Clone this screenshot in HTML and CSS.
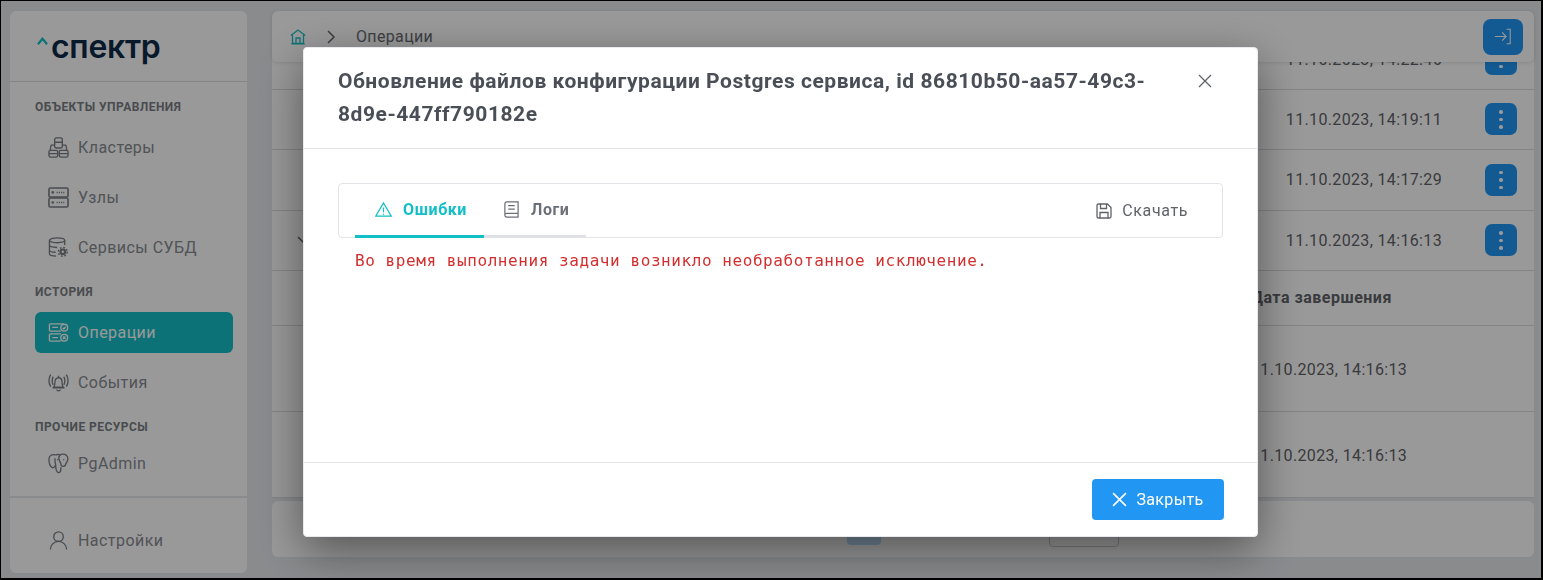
FILE: index.html
```html
<!DOCTYPE html>
<html lang="ru">
<head>
<meta charset="utf-8">
<title>Операции</title>
<link rel="stylesheet" href="styles.css">
</head>
<body>
<div class="screen">
	<aside class="side">
		<div class="logo">
			<svg class="logo-mark" viewBox="0 0 12 8"><path d="M1 7.500 6 1.500 11 7.500" fill="none" stroke="#17bfc6" stroke-width="2.400"/></svg>
			<span class="logo-text">спектр</span>
		</div>
		<nav class="side-nav">
			<h4 class="side-title">Объекты управления</h4>
			<a class="side-item" href="#">
				<svg class="side-icon" viewBox="0 0 22 22"><rect x="7" y="1" width="8" height="10.500" rx="1.500"/><path d="M7 5.500h8M7 8.500H3.500C2.500 9.500 2.500 12 2.500 14M15 8.500h3.500c1 1 1 3.500 1 5.500"/><rect x="1" y="14" width="9.200" height="7" rx="1.500"/><rect x="11.800" y="14" width="9.200" height="7" rx="1.500"/><path d="M1 17.500h9.200M11.800 17.500H21"/></svg>
				Кластеры
			</a>
			<a class="side-item" href="#">
				<svg class="side-icon node-icon" viewBox="0 0 22 22"><rect x="1" y="1" width="20" height="9.500" rx="1.500"/><rect x="1" y="11.500" width="20" height="9.500" rx="1.500"/><path class="node-dots" d="M9 5.700h9M9 16.200h9"/><circle class="dot" cx="5" cy="5.700" r="1.400"/><circle class="dot" cx="5" cy="16.200" r="1.400"/></svg>
				Узлы
			</a>
			<a class="side-item" href="#">
				<svg class="side-icon" viewBox="0 0 22 22"><ellipse cx="9.500" cy="3.500" rx="8" ry="2.500"/><path d="M1.500 3.500v14c0 1.500 3 2.500 7 2.500M17.500 3.500v5M1.500 8.500c0 1.500 3.500 2.500 8 2.500M1.500 13.500c0 1.300 3 2.300 6.500 2.500"/><circle class="gear-back" cx="15.500" cy="15.500" r="6"/><circle class="gear" cx="15.500" cy="15.500" r="3.500"/><circle class="gear-teeth" cx="15.500" cy="15.500" r="4.600"/><circle class="gear-hole" cx="15.500" cy="15.500" r="1.300"/></svg>
				Сервисы СУБД
			</a>
			<h4 class="side-title">История</h4>
			<a class="side-item active" href="#">
				<svg class="side-icon" viewBox="0 0 22 22"><path d="M13.500 9.500H2.500a1 1 0 0 1-1-1V3a1 1 0 0 1 1-1h14M13.500 20H2.500a1 1 0 0 1-1-1v-5.500a1 1 0 0 1 1-1h11M4.500 5.700h6M4.500 16.300h6"/><circle cx="17" cy="6" r="3.600"/><circle cx="17" cy="16.500" r="3.600"/><path d="M15.300 6l1.300 1.300 2-2.300M15.700 15.200l2.600 2.600M18.300 15.200l-2.600 2.600"/></svg>
				Операции
			</a>
			<a class="side-item" href="#">
				<svg class="side-icon" viewBox="0 0 22 22"><path d="M6 16c1.200-1.500 1.300-3.200 1.300-5.500 0-2.500 1.300-4.500 3.700-4.500s3.700 2 3.700 4.500c0 2.300.1 4 1.300 5.500zM4.800 16.500h12.400M9 18.500c.5 1.600 3.500 1.600 4 0M11 6V3.800"/><path d="M5.500 5C4 7 4 11 5.500 13.500M2.800 2.800C.6 6.500.6 11.500 2.800 15.300M16.500 5c1.500 2 1.500 6 0 8.500M19.200 2.800c2.200 3.700 2.200 8.700 0 12.500"/></svg>
				События
			</a>
			<h4 class="side-title">Прочие ресурсы</h4>
			<a class="side-item side-item-low" href="#">
				<svg class="side-icon" viewBox="0 0 22 22"><path d="M8 2.200C4.500.8 1 2.500 1 6.500c0 3.500 1.500 7.500 3.300 8.700 1.300.8 2.500-.2 3.200-2"/><path d="M8 2.200c1.800-1 3.500-1 4.500-.2 2-1 5-1 6.800.5 1.800 1.800 1.700 4.500.7 6.500-.8 1.500-1.800 2.800-2 4.300"/><path d="M7.500 5.500c-.8 2.500.2 4.500.5 7 .3 2.500-.2 7.500 2.800 8 2.800.4 2.700-3.300 2.700-5.500"/><path d="M12.500 2c-1.500 2-1.500 4-.5 6 .8 1.800 1.800 3 2 5.500 1 .5 3 .5 4.500-.5"/><circle class="dot" cx="10" cy="7" r=".7"/><circle class="dot" cx="16.500" cy="7" r=".7"/></svg>
				PgAdmin
			</a>
		</nav>
		<div class="side-foot">
			<a class="side-item" href="#">
				<svg class="side-icon" viewBox="0 0 22 22"><circle cx="11" cy="7" r="5"/><path d="M2.500 20.500c0-4.500 3.500-8.500 8.500-8.500s8.500 4 8.500 8.500"/></svg>
				Настройки
			</a>
		</div>
	</aside>

	<main class="main">
		<header class="top">
			<svg class="home" viewBox="0 0 16 16"><path d="M.8 6.500 8 1l7.200 5.500M2.500 6v8.500h11V6M1.200 14.800h13.600M6 14.500V9h4v5.500"/></svg>
			<svg class="crumb-arrow" viewBox="0 0 8 14"><path d="M1 1l6 6-6 6"/></svg>
			<span class="crumb">Операции</span>
			<a class="top-btn" href="#">
				<svg viewBox="0 0 20 18"><path d="M1 9h12.500M9 4.500 13.500 9 9 13.500M14 1h4v16h-4"/></svg>
			</a>
		</header>

		<div class="rows">
			<div class="row"><span class="date">11.10.2023, 14:22:46</span><a class="more" href="#"><i></i><i></i><i></i></a></div>
			<div class="row"><span class="date">11.10.2023, 14:19:11</span><a class="more" href="#"><i></i><i></i><i></i></a></div>
			<div class="row"><span class="date">11.10.2023, 14:17:29</span><a class="more" href="#"><i></i><i></i><i></i></a></div>
			<div class="row"><svg class="row-open" viewBox="0 0 12 8"><path d="M1 1l5 5 5-5"/></svg><span class="date">11.10.2023, 14:16:13</span><a class="more" href="#"><i></i><i></i><i></i></a></div>
			<div class="sub-head"><span class="sub-date">Дата завершения</span></div>
			<div class="sub-row"><span class="sub-date">11.10.2023, 14:16:13</span></div>
			<div class="sub-row"><span class="sub-date">11.10.2023, 14:16:13</span></div>
		</div>

		<div class="pager">
			<span class="page-on"></span>
			<span class="page-size"></span>
		</div>
	</main>
</div>

<div class="shade"></div>

<div class="modal">
	<div class="modal-head">
		<h2 class="modal-title">Обновление файлов конфигурации Postgres сервиса, id 86810b50-aa57-49c3-8d9e-447ff790182e</h2>
		<svg class="modal-x" viewBox="0 0 14 14"><path d="M1 1l12 12M13 1 1 13"/></svg>
	</div>
	<div class="modal-body">
		<div class="tabs">
			<a class="tab tab-on" href="#">
				<svg viewBox="0 0 18 16"><path d="M9 1 .8 15h16.400zM9 6v5M9 12.200v1.300"/></svg>
				Ошибки
			</a>
			<a class="tab" href="#">
				<svg viewBox="0 0 16 18"><path d="M3 1h12v16H3c-1 0-2-.8-2-2V3c0-1 1-2 2-2zM1 14.500c0-1 1-1.500 2-1.500h12M4.500 5h7M4.500 8.500h7"/></svg>
				Логи
			</a>
			<a class="save" href="#">
				<svg viewBox="0 0 16 16"><path d="M2.500 1h9L15 4.500V13.500a1.500 1.500 0 0 1-1.500 1.500h-11A1.500 1.500 0 0 1 1 13.500v-11A1.500 1.500 0 0 1 2.500 1zM4.500 1v4.500h6V1M4 15V9.500h8V15"/></svg>
				Скачать
			</a>
		</div>
		<pre class="err">Во время выполнения задачи возникло необработанное исключение.</pre>
	</div>
	<div class="modal-foot">
		<a class="close-btn" href="#">
			<svg viewBox="0 0 14 14"><path d="M1 1l12 12M13 1 1 13"/></svg>
			Закрыть
		</a>
	</div>
</div>
</body>
</html>
```

FILE: styles.css
```css
*{ box-sizing:border-box; }
html,body{ margin:0; padding:0; height:100%; overflow:hidden; }
body{ background:#000; font:16px/20px "Roboto","Liberation Sans",sans-serif; letter-spacing:.35px; color:#5f6368; }
a{ text-decoration:none; color:inherit; }
h2,h4{ margin:0; }
svg{ fill:none; stroke:currentColor; stroke-width:1.5; flex:none; display:block; }

.screen{ display:flex; gap:25px; height:577px; margin:1px 2px 0 1px; padding:10px 7px 5px 9px; background:#e6e8ec; overflow:hidden; }

/* левая колонка */
.side{ width:237px; flex:none; display:flex; flex-direction:column; background:#fff; border-radius:6px; }
.logo{ height:71px; display:flex; align-items:flex-start; padding:22px 0 0 27px; border-bottom:1px solid #dadce0; }
.logo svg{ stroke:none; }
.logo-mark{ width:11px; height:8px; margin:4px 3px 0 0; }
.logo-text{ font:600 32px/28px "Inter",sans-serif; color:#0d2a47; letter-spacing:-.3px; }
.side-nav{ flex:1; padding:16px 14px 0 25px; }
.side-title{ font-size:12px; font-weight:700; line-height:18px; letter-spacing:.45px; text-transform:uppercase; color:#7a7e84; }
.side-item{ display:flex; align-items:center; gap:9px; height:41px; padding-left:13px; border-radius:6px; letter-spacing:.45px; color:#878b91; }
.side-title + .side-item{ margin-top:11px; }
.side-item + .side-item{ margin-top:9px; }
.side-item + .side-title{ margin-top:15px; }
.side-title + .side-item-low{ margin-top:7px; }
.side-icon{ width:21px; height:21px; stroke-width:1.4; color:#7a7e84; }
.node-icon{ stroke-width:1.7; }
.node-dots{ stroke-dasharray:1.2 1.100; }
.dot{ fill:currentColor; stroke:none; }
.gear-back{ fill:#fff; stroke:none; }
.gear{ fill:currentColor; stroke:none; }
.gear-teeth{ stroke-width:1.500; stroke-dasharray:1.800 1.800; }
.gear-hole{ fill:#fff; stroke:none; }
.active{ background:#17bfc6; color:#fff; }
.active .side-icon{ color:#fff; }
.side-foot{ border-top:2px solid #e6e8ec; height:77px; padding:22px 14px 0 25px; }

/* шапка и таблица */
.main{ flex:1; min-width:0; display:flex; flex-direction:column; }
.top{ position:relative; z-index:2; height:51px; flex:none; display:flex; align-items:center; padding:0 11px 0 18px; background:#fff; border-radius:6px; box-shadow:0 1px 4px rgba(0,0,0,.12); }
.home{ width:16px; height:16px; color:#17bfc6; stroke-width:1.3; }
.crumb-arrow{ width:8px; height:14px; margin-left:21px; color:#5f6368; }
.crumb{ margin-left:21px; color:#666a70; }
.top-btn{ margin-left:auto; width:40px; height:36px; display:flex; align-items:center; justify-content:center; background:#2196f3; border-radius:8px; color:#fff; }
.top-btn svg{ width:18px; height:17px; stroke-width:1.2; }

.rows{ margin-top:-32.6px; display:flex; flex-direction:column; background:#fff; }
.row{ height:60.4px; flex:none; display:flex; align-items:center; justify-content:flex-end; padding-right:17px; border-bottom:1px solid #dadce0; position:relative; color:#5f6368; }
.row-open{ position:absolute; left:25px; top:25px; width:12px; height:8px; }
.date{ margin-right:43px; padding-top:1px; }
.more{ width:32px; height:32px; display:flex; flex-direction:column; align-items:center; justify-content:center; gap:4px; background:#2196f3; border-radius:7px; }
.more i{ width:3.500px; height:3.500px; background:#fff; border-radius:50%; }
.sub-head{ height:54.6px; flex:none; display:flex; align-items:center; padding-top:1px; border-bottom:1px solid #dadce0; font-weight:700; letter-spacing:.5px; }
.sub-row{ height:86px; flex:none; display:flex; align-items:center; padding-top:3px; border-bottom:1px solid #dadce0; }
.sub-date{ margin-left:979px; }

.pager{ height:56px; flex:none; margin-top:3px; display:flex; background:#fff; border-radius:6px; padding:0 0 0 575px; align-items:flex-start; }
.page-on{ width:34px; height:44px; background:#bbdefb; border-radius:4px; }
.page-size{ width:70px; height:46px; margin-left:168px; border:1px solid #c8cace; border-radius:4px; }

/* затемнение и окно */
.shade{ position:fixed; left:1px; top:1px; width:1540px; height:577px; background:rgba(0,0,0,.4); z-index:5; }
.modal{ position:fixed; left:303px; top:47px; width:955px; height:490px; z-index:6; display:flex; flex-direction:column; background:#fff; border:1px solid #e8eaed; border-radius:4px; box-shadow:0 14px 45px rgba(0,0,0,.45); }
.modal-head{ height:101px; flex:none; display:flex; padding:17px 45px 0 34px; border-bottom:1px solid #e2e4e8; }
.modal-title{ flex:1; font-size:21px; line-height:33px; font-weight:700; letter-spacing:.54px; color:#4a4f57; }
.modal-x{ width:14px; height:14px; margin:9px 0 0 40px; color:#5f6368; stroke-width:1.3; }
.modal-body{ flex:1; padding:34px 34px 0; }
.tabs{ height:55px; display:flex; padding:0 34px 0 16px; border:1px solid #e2e4e8; border-radius:4px; }
.tab{ display:flex; align-items:center; gap:11px; height:54px; padding:0 16px 0 19px; border-bottom:3px solid #dfe1e6; font-weight:700; letter-spacing:.6px; color:#6b7078; }
.tab svg{ width:17px; height:17px; stroke-width:1.300; }
.tab-on{ color:#12bfc9; border-bottom-color:#12bfc9; padding:0 17px 0 20px; }
.save{ margin-left:auto; display:flex; align-items:center; gap:10px; letter-spacing:.6px; color:#5f6368; }
.save svg{ width:16px; height:16px; stroke-width:1.300; }
.err{ margin:12px 0 0 17px; font:16px/22px "DejaVu Sans Mono",monospace; letter-spacing:.57px; color:#d32f2f; }
.modal-foot{ height:74px; flex:none; display:flex; justify-content:flex-end; padding:16px 33px 0 0; border-top:1px solid #e2e4e8; }
.close-btn{ width:132px; height:41px; display:flex; align-items:center; justify-content:center; gap:9px; background:#2196f3; border-radius:4px; color:#fff; }
.close-btn svg{ width:15px; height:15px; stroke-width:1.500; }
```
